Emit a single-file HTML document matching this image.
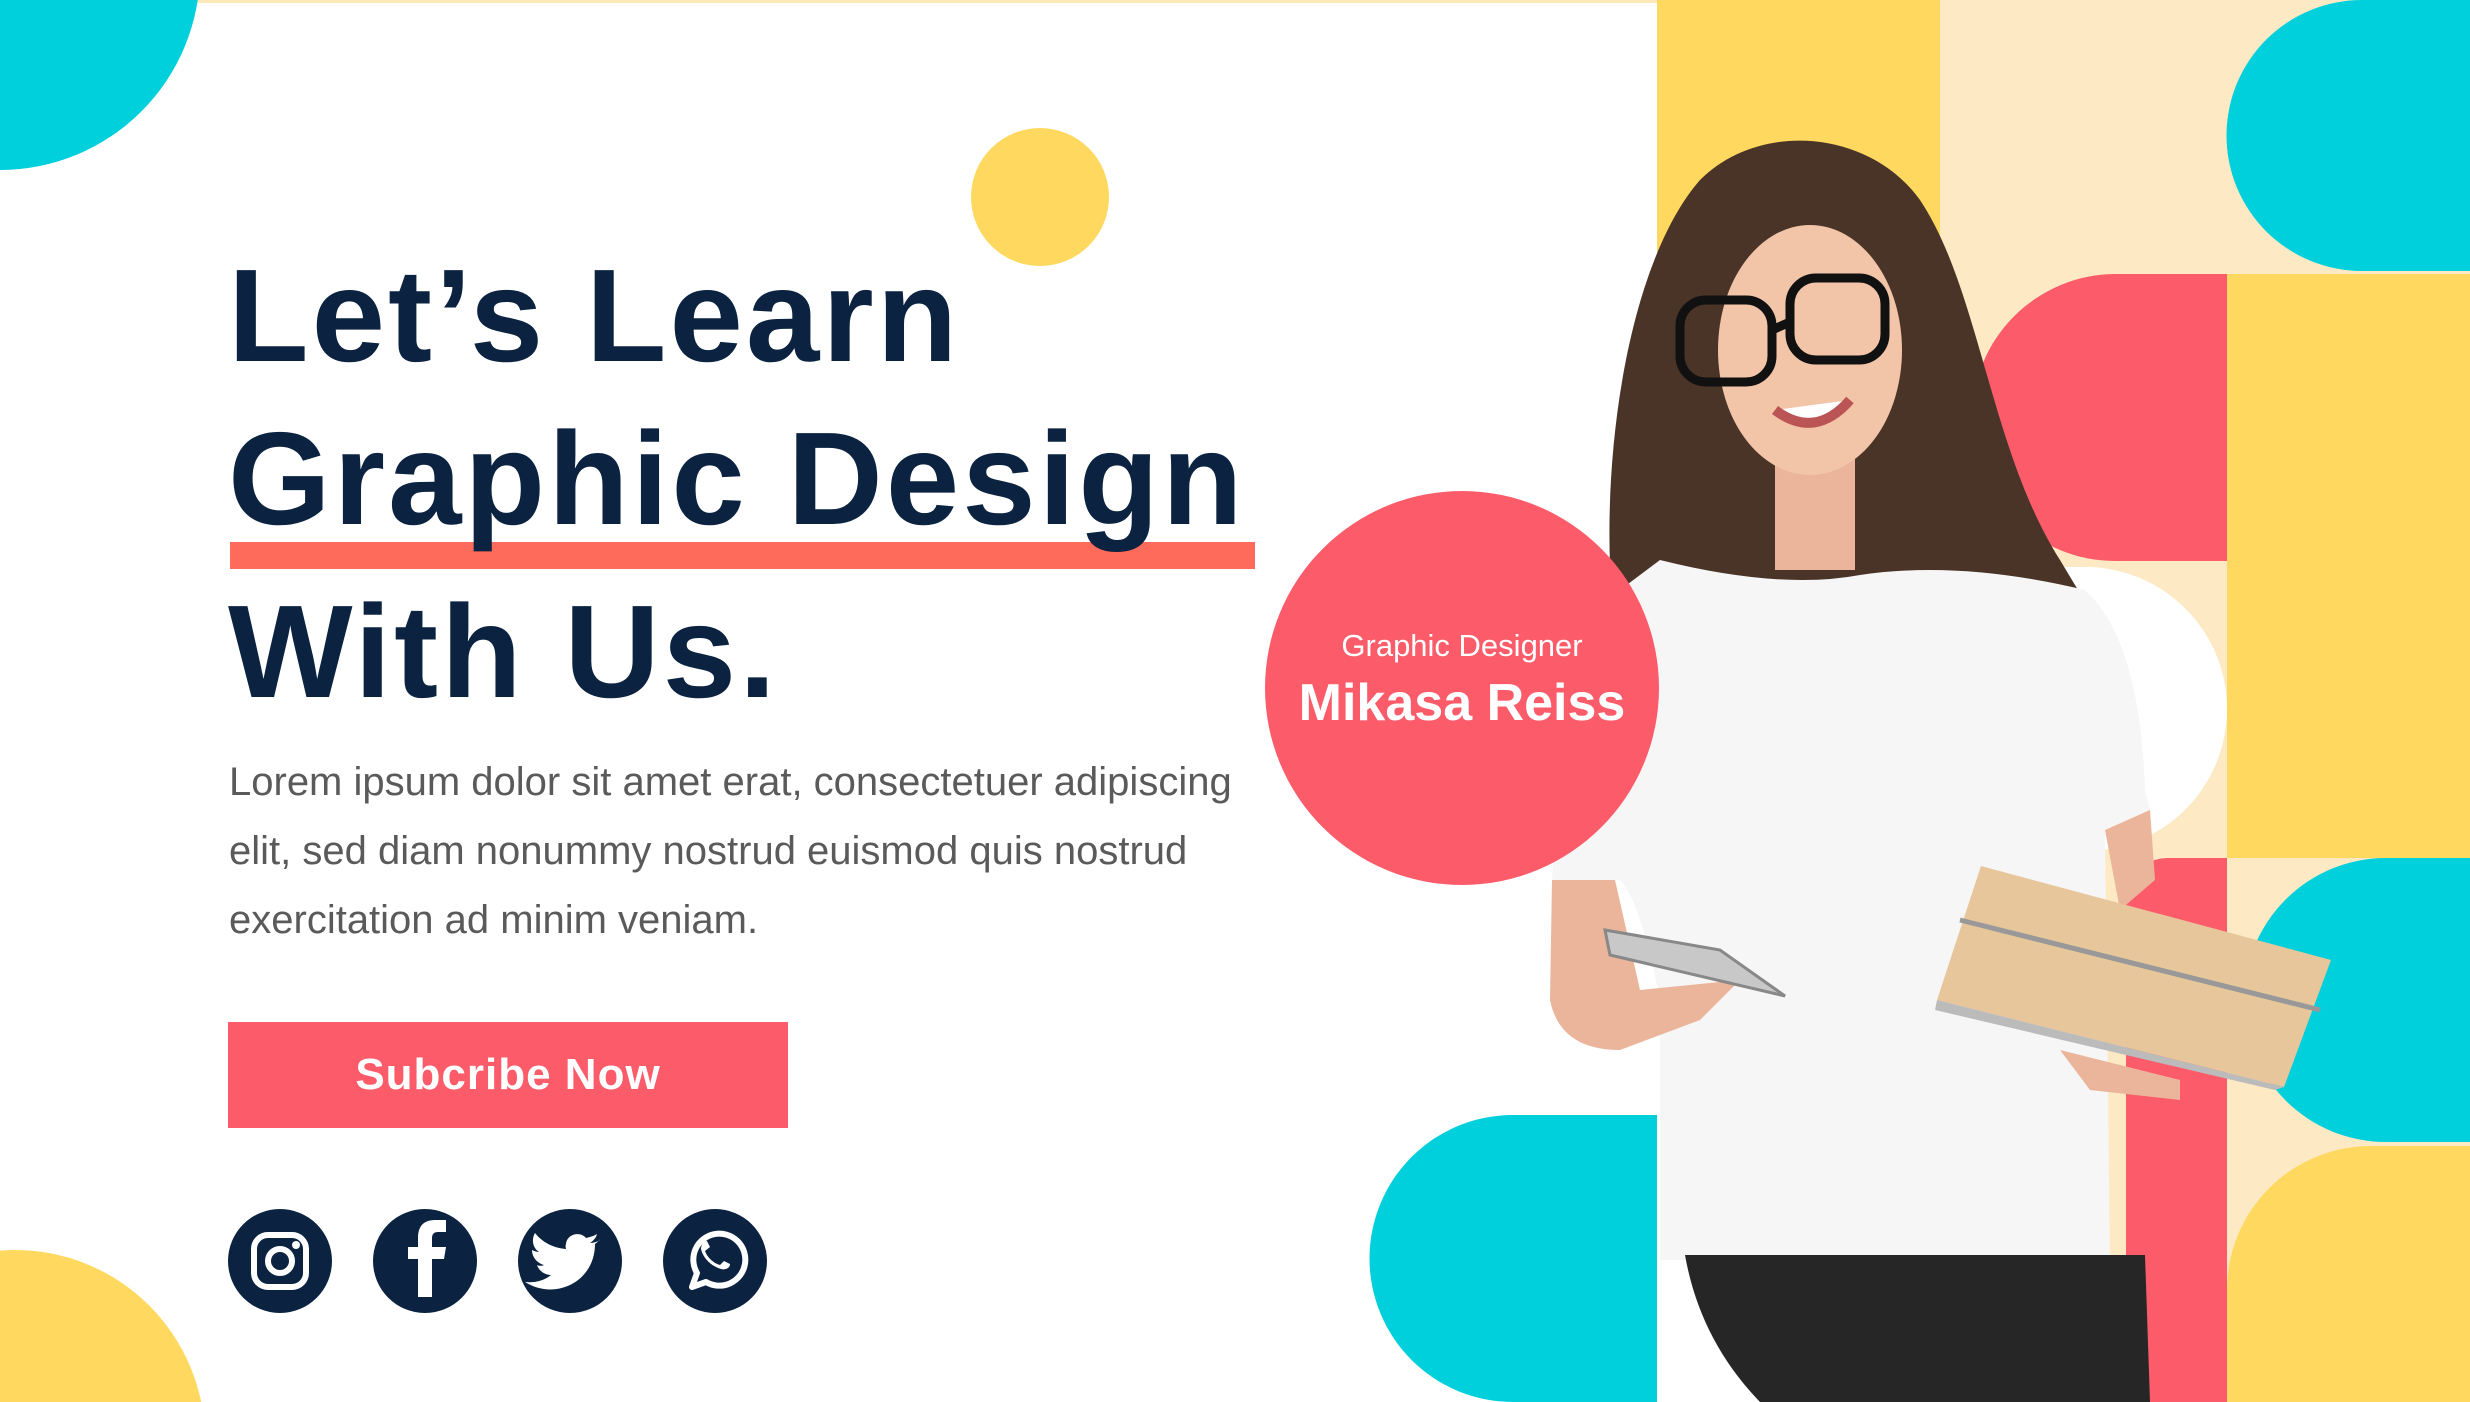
<!DOCTYPE html>
<html><head><meta charset="utf-8"><style>
*{margin:0;padding:0;box-sizing:border-box}
html,body{width:2470px;height:1402px;overflow:hidden;background:#fff}
#w{position:relative;width:2470px;height:1402px;overflow:hidden;font-family:"Liberation Sans",sans-serif}
.a{position:absolute}
h1{position:absolute;left:228px;font-size:132px;font-weight:700;color:#0b2340;line-height:1;white-space:nowrap;letter-spacing:3px}
p.t{position:absolute;left:229px;top:748px;font-size:40px;line-height:69px;color:#5a5a5a;white-space:nowrap}
</style></head><body><div id="w">
<svg class="a" style="left:0;top:0" width="2470" height="1402" viewBox="0 0 2470 1402">
<rect x="0" y="0" width="2470" height="3" fill="#fde9b8"/>
<circle cx="0" cy="-30" r="200" fill="#00cfdc"/>
<circle cx="1040" cy="197" r="69" fill="#ffd95f"/>
<circle cx="15" cy="1440" r="190" fill="#ffd95f"/>
<rect x="230" y="542" width="1025" height="27" fill="#ff6b5b"/>
</svg>
<h1 style="top:250px">Let’s Learn</h1>
<h1 style="top:413px">Graphic Design</h1>
<h1 style="top:586px">With Us.</h1>
<p class="t">Lorem ipsum dolor sit amet erat, consectetuer adipiscing<br>elit, sed diam nonummy nostrud euismod quis nostrud<br>exercitation ad minim veniam.</p>
<div class="a" style="left:228px;top:1022px;width:560px;height:106px;background:#fc5c6a;color:#fff;font-weight:700;font-size:44px;text-align:center;line-height:106px;letter-spacing:1px">Subcribe Now</div>

<svg class="a" style="left:0;top:0" width="2470" height="1402" viewBox="0 0 2470 1402">
<g fill="#0b2340">
<circle cx="280" cy="1261" r="52"/><circle cx="425" cy="1261" r="52"/><circle cx="570" cy="1261" r="52"/><circle cx="715" cy="1261" r="52"/></g>
<g fill="none" stroke="#fff" stroke-width="6">
<rect x="254" y="1235" width="52" height="52" rx="14"/><circle cx="280" cy="1261" r="12"/>
<path d="M692 1287 l5-14 a26 26 0 1 1 9 9 z" stroke-linejoin="round"/></g>
<circle cx="296" cy="1245" r="4" fill="#fff"/>
<path d="M432 1297 v-38 h12 l2-12 h-14 v-9 c0-4 2-6 6-6 h8 v-12 h-11 c-12 0-17 7-17 18 v9 h-10 v12 h10 v38 z" fill="#fff"/>
<path d="M600 1240 c-3 2-7 3-10 3 c3-2 6-5 7-9 c-3 2-7 3-11 4 c-6-7-19-4-20 6 c-1 2 0 4 0 5 c-13-1-24-7-31-16 c-4 7-2 15 4 19 c-2 0-5-1-7-2 c0 7 5 13 12 15 c-2 1-5 1-7 0 c2 6 8 10 14 10 c-7 6-17 8-26 7 c30 19 70 0 70-38 c3-2 5-5 5-4z" fill="#fff"/>
<path d="M705 1251 c2 6 8 12 15 14 l4-4 l6 3 c0 5-6 6-9 5 c-10-3-18-11-20-20 c0-3 2-8 6-8 l3 6 z" fill="#fff"/>

<rect x="1940" y="0" width="530" height="1402" fill="#fde9c3"/>
<path d="M1657 0 H1940 V600 H1657 Z" fill="#ffd95f"/>
<path d="M2362 0 H2470 V271 H2362 A135 135 0 0 1 2362 0 Z" fill="#00cfdc"/>
<path d="M2227 274 V561 H2115 A143 143 0 0 1 1972 418 A144 144 0 0 1 2115 274 Z" fill="#fc5c6a"/>
<path d="M2227 274 H2470 V858 H2227 Z" fill="#ffd95f"/>
<path d="M1940 567 H2085 A142 142 0 0 1 2085 851 H1940 Z" fill="#fff"/>
<path d="M2386 858 H2470 V1142 H2386 A142 142 0 0 1 2386 858 Z" fill="#00cfdc"/>
<path d="M2126 1402 V900 A42 42 0 0 1 2168 858 H2227 V1402Z" fill="#fc5c6a"/>
<path d="M2227 1402 V1290 A144 144 0 0 1 2371 1146 H2470 V1402Z" fill="#ffd95f"/>
<path d="M1657 1115 V1402 H1513 A143 143 0 0 1 1513 1115 Z" fill="#00cfdc"/>

<path d="M1612 600 C1600 450 1630 260 1700 180 C1760 120 1870 130 1920 200 C1980 290 1990 450 2060 560 L2090 610 L1640 640 Z" fill="#4a3428"/>
<rect x="1775" y="430" width="80" height="140" fill="#eab59a"/>
<ellipse cx="1810" cy="350" rx="92" ry="125" fill="#f2c4a8"/>
<g fill="none" stroke="#111" stroke-width="9">
<rect x="1680" y="300" width="92" height="82" rx="26"/><rect x="1790" y="278" width="95" height="82" rx="26"/>
<path d="M1772 330 L1790 322"/></g>
<path d="M1775 410 Q1815 440 1850 400" stroke="#b55" stroke-width="10" fill="#fff"/>
<path d="M1660 560 Q1780 590 1860 575 Q1960 560 2085 590 Q2140 640 2145 790 L2150 810 L2105 830 L2110 1260 H1660 L1660 1000 Q1640 900 1620 880 L1552 880 Q1560 700 1620 590 Z" fill="#f6f6f6"/>
<path d="M1552 880 L1550 1000 Q1560 1050 1620 1050 L1700 1020 L1740 980 L1640 990 L1615 880 Z" fill="#eab59a"/>
<path d="M2105 830 L2150 810 L2155 880 L2120 910 Z" fill="#eab59a"/>
<path d="M2060 1050 L2180 1080 L2180 1100 L2090 1090 Z" fill="#eab59a"/>
<path d="M1605 930 L1720 950 L1785 996 L1610 955 Z" fill="#c8c8c8" stroke="#888" stroke-width="3"/>
<path d="M1937 1000 L1981 866 L2331 960 L2284 1087 Z" fill="#e8c69c"/>
<path d="M1937 1000 L2284 1087 L2275 1090 L1935 1010 Z" fill="#bbb"/>
<path d="M1960 920 L2320 1010" stroke="#999" stroke-width="5"/>
<path d="M1685 1255 H2145 L2150 1402 H1760 Q1700 1340 1685 1255 Z" fill="#262626"/>
<circle cx="1462" cy="688" r="197" fill="#fc5c6a"/>
</svg>
<div class="a" style="left:1265px;top:628px;width:394px;text-align:center;color:#fff;font-size:31px">Graphic Designer</div>
<div class="a" style="left:1265px;top:673px;width:394px;text-align:center;color:#fff;font-size:52px;font-weight:700">Mikasa Reiss</div>
</div></body></html>
